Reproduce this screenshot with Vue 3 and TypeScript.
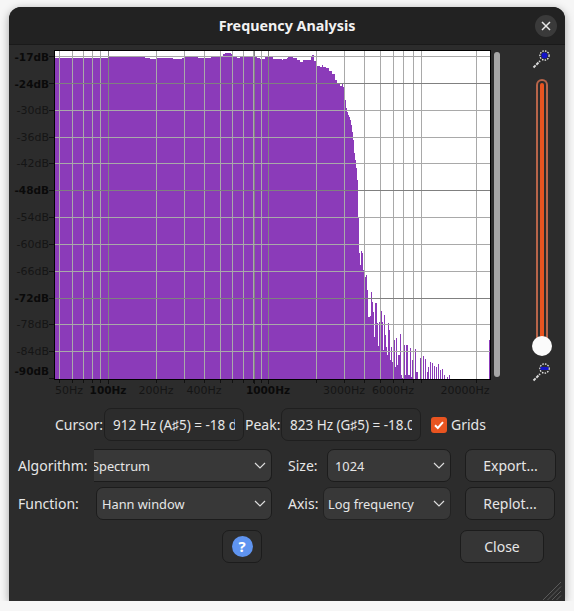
<template>
  <div class="window">
    <div class="titlebar">
      <span class="title">Frequency Analysis</span>
      <button class="win-close">
        <svg width="10" height="10" viewBox="0 0 10 10"><path d="M1 1l8 8M9 1l-8 8" stroke="#e8e8e8" stroke-width="1.5" fill="none" /></svg>
      </button>
    </div>

    <div class="plot-row">
      <svg class="plot" width="483" height="355" viewBox="9 45 483 355">
        <rect x="54" y="50" width="437" height="330" fill="#000" />
        <rect x="55" y="51" width="435" height="328" fill="#fff" />
        <path :d="spectrumPath" fill="#8b3bb9" shape-rendering="crispEdges" />
        <g shape-rendering="crispEdges">
          <line v-for="v in vLines" :key="'v' + v.x" :x1="v.x + 0.5" :x2="v.x + 0.5" y1="51" y2="379" :stroke="v.major ? '#828282' : '#a9a9a9'" />
          <line v-for="h in dbLines" :key="'h' + h.y" x1="55" x2="490" :y1="h.y + 0.5" :y2="h.y + 0.5" :stroke="h.major ? '#808080' : '#a9a9a9'" />
          <line v-for="v in vLines" :key="'t' + v.x" :x1="v.x + 0.5" :x2="v.x + 0.5" y1="380" :y2="v.major ? 384 : 383" stroke="#111" />
          <line v-for="h in dbLines" :key="'d' + h.y" x1="49" x2="54" :y1="h.y + 0.5" :y2="h.y + 0.5" stroke="#111" />
          <line x1="49" x2="54" y1="378.5" y2="378.5" stroke="#111" />
        </g>
        <text v-for="l in dbLabels" :key="l.text" class="axis" :class="{ strong: l.major }" x="49" :y="l.y" text-anchor="end">{{ l.text }}</text>
        <text v-for="l in hzLabels" :key="l.text" class="axis" :class="{ strong: l.major }" :x="l.x" y="394" text-anchor="middle">{{ l.text }}</text>
      </svg>

      <div class="scrollbar"></div>

      <div class="gain">
        <svg class="wand" width="20" height="20" viewBox="0 0 20 20">
          <path d="M1.5 18.5l6.5-6.5" stroke="#d8d8d8" stroke-width="2" stroke-dasharray="3 1" fill="none" />
          <circle cx="12.5" cy="6.5" r="4.600" fill="none" stroke="#ececec" stroke-width="1.3" stroke-dasharray="1.500 1.200" />
          <circle cx="12.5" cy="6.5" r="3" fill="#1414c8" />
        </svg>
        <div class="track">
          <div class="fill"></div>
          <div class="thumb"></div>
        </div>
        <svg class="wand low" width="20" height="20" viewBox="0 0 20 20">
          <path d="M1.5 18.5l6.5-6.5" stroke="#d8d8d8" stroke-width="2" stroke-dasharray="3 1" fill="none" />
          <circle cx="12.5" cy="6.5" r="4.600" fill="none" stroke="#ececec" stroke-width="1.3" stroke-dasharray="1.500 1.200" />
          <rect x="8.5" y="5" width="8" height="3" fill="#1414c8" />
        </svg>
      </div>
    </div>

    <div class="readout">
      <label class="cursor">Cursor:</label>
      <input class="field" readonly value="912 Hz (A♯5) = -18 dB" />
      <label class="peak">Peak:</label>
      <input class="field" readonly value="823 Hz (G♯5) = -18.0 dB" />
      <span class="check">
        <svg width="12" height="12" viewBox="0 0 12 12"><path d="M2 6.2l2.8 2.8L10 3.2" stroke="#fff" stroke-width="2" fill="none" /></svg>
      </span>
      <label>Grids</label>
    </div>

    <div class="row first">
      <label class="row-label">Algorithm:</label>
      <div class="combo algo">
        <span class="clipped">Spectrum</span>
        <svg class="chev" width="12" height="7" viewBox="0 0 12 7"><path d="M1 1l5 5 5-5" /></svg>
      </div>
      <label class="mid-label">Size:</label>
      <div class="combo size">
        <span>1024</span>
        <svg class="chev" width="12" height="7" viewBox="0 0 12 7"><path d="M1 1l5 5 5-5" /></svg>
      </div>
      <button class="btn side export">Export...</button>
    </div>

    <div class="row second">
      <label class="row-label">Function:</label>
      <div class="combo func">
        <span>Hann window</span>
        <svg class="chev" width="12" height="7" viewBox="0 0 12 7"><path d="M1 1l5 5 5-5" /></svg>
      </div>
      <label class="mid-label">Axis:</label>
      <div class="combo axis-combo">
        <span>Log frequency</span>
        <svg class="chev" width="12" height="7" viewBox="0 0 12 7"><path d="M1 1l5 5 5-5" /></svg>
      </div>
      <button class="btn side">Replot...</button>
    </div>

    <div class="row third">
      <button class="btn help"><span class="help-dot">?</span></button>
      <button class="btn close">Close</button>
    </div>

    <svg class="grip" width="20" height="20" viewBox="0 0 20 20">
      <path d="M1 19L19 1M5.5 19L19 5.500M10 19l9-9M14.500 19l4.500-4.500" stroke="#5a5a5a" stroke-width="1" fill="none" />
    </svg>
  </div>
</template>

<script setup lang="ts">
import { computed } from 'vue'

// x of each frequency grid line; the darker ones are the decades
const vLines = [59, 72, 83, 92, 100, 108, 156, 184, 204, 220, 232, 243, 253, 254, 261, 268, 316, 344, 364, 380, 393, 403, 413, 421, 476].map((x) => ({
  x,
  major: x === 108 || x === 254 || x === 268,
}))

const dbLines = [56, 83, 110, 137, 163, 190, 217, 244, 271, 298, 324, 351].map((y) => ({
  y,
  major: y === 83 || y === 190 || y === 298,
}))

const dbLabels = [
  ['-17dB', 61, true], ['-24dB', 88, true], ['-30dB', 114, false], ['-36dB', 141, false],
  ['-42dB', 167, false], ['-48dB', 194, true], ['-54dB', 221, false], ['-60dB', 248, false],
  ['-66dB', 275, false], ['-72dB', 302, true], ['-78dB', 328, false], ['-84dB', 355, false],
  ['-90dB', 375, true],
].map(([text, y, major]) => ({ text: text as string, y: y as number, major: major as boolean }))

const hzLabels = [
  { text: '50Hz', x: 69, major: false },
  { text: '100Hz', x: 108, major: true },
  { text: '200Hz', x: 156, major: false },
  { text: '400Hz', x: 204, major: false },
  { text: '1000Hz', x: 268, major: true },
  { text: '3000Hz', x: 344, major: false },
  { text: '6000Hz', x: 393, major: false },
  { text: '20000Hz', x: 465, major: false },
]

// [first column, top y] runs read off the curve, each lasts until the next one
const runs: [number, number][] = [
  [55, 58], [108, 57], [145, 58], [150, 59], [157, 58], [173, 59], [182, 58], [185, 57], [198, 58],
  [211, 57], [215, 56], [223, 54], [225, 53], [231, 54], [233, 57], [237, 58], [240, 57], [257, 58],
  [260, 59], [265, 57], [268, 56], [273, 59], [282, 60], [283, 59], [287, 58], [288, 57], [293, 58],
  [297, 60], [300, 62], [303, 60], [311, 57], [312, 55], [314, 61], [317, 66], [320, 67], [322, 65],
  [323, 67], [326, 68], [329, 71], [332, 74], [335, 80], [337, 83], [340, 86], [342, 84], [343, 87],
  [344, 96], [345, 100], [346, 108], [347, 112], [348, 115], [349, 117], [350, 120], [351, 125],
  [352, 132], [353, 140], [354, 153], [355, 160], [356, 168], [357, 180], [358, 217], [359, 253],
  [360, 265], [361, 251], [362, 253], [363, 270], [364, 298], [365, 277], [366, 275], [367, 290],
  [368, 317], [370, 316], [371, 292], [372, 302], [373, 312], [374, 337], [375, 303], [377, 323],
  [378, 346], [379, 322], [381, 311], [382, 322], [383, 350], [384, 315], [385, 335], [386, 347],
  [387, 355], [388, 323], [389, 330], [390, 360], [391, 347], [392, 362], [393, 340], [395, 367],
  [396, 338], [397, 365], [398, 355], [400, 334], [401, 375], [402, 378], [403, 345], [405, 375],
  [406, 345], [408, 375], [410, 348], [411, 377], [412, 360], [413, 379], [415, 349], [416, 372],
  [418, 379], [420, 358], [421, 379], [423, 356], [424, 379], [425, 359], [426, 379], [427, 372],
  [428, 367], [429, 379], [430, 362], [431, 379], [432, 363], [433, 379], [434, 366], [435, 379],
  [436, 367], [437, 379], [438, 364], [439, 379], [440, 370], [441, 379], [442, 369], [443, 379],
  [444, 375], [445, 379], [447, 377], [448, 379], [449, 375], [450, 379], [489, 340], [490, 379],
]

const spectrumPath = computed(() => {
  let d = ''
  for (let i = 0; i < runs.length - 1; i++) {
    const [x, top] = runs[i]
    const next = runs[i + 1][0]
    if (top >= 379) continue
    d += `M${x} ${top}H${next}V379H${x}Z`
  }
  return d
})
</script>

<style>
html,
body {
  background: #f6f6f6;
}
</style>

<style scoped>
.window {
  position: relative;
  box-sizing: border-box;
  width: 556px;
  height: 594px;
  margin: 7px 0 0 9px;
  background: #2c2c2c;
  border-radius: 12px 12px 0 0;
  box-shadow: 0 2px 8px rgba(0, 0, 0, 0.35);
  color: #e6e6e6;
  font-family: "Noto Sans", sans-serif;
  font-size: 14px;
  overflow: hidden;
}

.titlebar {
  display: flex;
  align-items: center;
  justify-content: center;
  height: 37px;
  background: #222222;
  border-bottom: 1px solid #1a1a1a;
  position: relative;
}

.title {
  font-weight: 700;
  font-size: 14.3px;
  color: #f2f2f2;
}

.win-close {
  position: absolute;
  right: 8px;
  top: 8px;
  width: 22px;
  height: 22px;
  border: none;
  border-radius: 50%;
  background: #3a3a3a;
  display: flex;
  align-items: center;
  justify-content: center;
  padding: 0;
}

.plot-row {
  display: flex;
  height: 363px;
}

.plot {
  display: block;
  flex: none;
}

.axis {
  font-family: "DejaVu Sans", sans-serif;
  font-size: 11px;
  fill: #151515;
}

.axis.strong {
  font-size: 10.5px;
  font-weight: 700;
  fill: #0a0a0a;
}

.scrollbar {
  flex: none;
  width: 6px;
  height: 325px;
  margin: 7px 0 0 2px;
  border-radius: 3px;
  background: #a6a6a6;
}

.gain {
  flex: none;
  width: 40px;
  margin-left: 22px;
  display: flex;
  flex-direction: column;
  align-items: center;
}

.wand {
  flex: none;
  margin-top: 4px;
}

.wand.low {
  margin-top: auto;
  margin-bottom: 26px;
}

.track {
  position: relative;
  box-sizing: border-box;
  flex: none;
  width: 12px;
  height: 266px;
  margin-top: 10px;
  border: 2px solid #b8654a;
  border-bottom: none;
  border-radius: 6px 6px 0 0;
  background: #2c2c2c;
}

.fill {
  position: absolute;
  left: 2px;
  right: 2px;
  top: 2px;
  bottom: 0;
  border-radius: 2px 2px 0 0;
  background: #e95420;
}

.thumb {
  position: absolute;
  left: 50%;
  bottom: -11px;
  width: 20px;
  height: 20px;
  margin-left: -10px;
  border-radius: 50%;
  background: #fbfbfb;
}

.readout {
  display: flex;
  align-items: center;
  height: 33px;
  padding-left: 46px;
}

.readout label {
  flex: none;
  white-space: nowrap;
}

.readout .cursor {
  width: 49px;
}

.readout .peak {
  width: 36px;
  margin-left: 1px;
}

.field {
  box-sizing: border-box;
  flex: none;
  width: 140px;
  height: 33px;
  padding: 0 8px;
  border: 1px solid #1f1f1f;
  border-radius: 7px;
  background: #2c2c2c;
  color: #e6e6e6;
  font: inherit;
  font-size: 13.5px;
  outline: none;
}

.check {
  display: flex;
  align-items: center;
  justify-content: center;
  width: 16px;
  height: 16px;
  margin: 0 4px 0 10px;
  border-radius: 3px;
  background: #e95420;
}

.row {
  display: flex;
  align-items: center;
  height: 33px;
}

.row.first {
  margin-top: 8px;
}

.row.second {
  margin-top: 5px;
}

.row.third {
  margin-top: 10px;
}

.row-label {
  width: 76px;
  margin-left: 9px;
  flex: none;
  white-space: nowrap;
}

.mid-label {
  width: 35px;
  margin-left: 16px;
  flex: none;
}

.combo {
  box-sizing: border-box;
  flex: none;
  display: flex;
  align-items: center;
  justify-content: space-between;
  height: 33px;
  padding: 0 5px;
  border: 1px solid #1c1c1c;
  border-radius: 7px;
  background: #383838;
  font-size: 12.8px;
  overflow: hidden;
}

.combo.algo {
  width: 178px;
  padding-left: 0;
  border-left: none;
  border-radius: 0 7px 7px 0;
}

.clipped {
  margin-left: -2px;
}

.combo.func {
  width: 176px;
  margin-left: 2px;
}

.combo.size {
  width: 124px;
  margin-left: 4px;
  padding-left: 7px;
}

.combo.axis-combo {
  width: 128px;
  padding-left: 4px;
  border-color: #222;
}

.chev {
  flex: none;
}

.chev path {
  fill: none;
  stroke: #dcdcdc;
  stroke-width: 1.2;
}

.btn {
  box-sizing: border-box;
  height: 33px;
  border: 1px solid #1c1c1c;
  border-radius: 7px;
  background: #353535;
  color: #e6e6e6;
  font: inherit;
  padding: 0;
}

.btn.side {
  width: 90px;
  margin-left: 14px;
  flex: none;
}

.btn.export {
  width: 91px;
}

.btn.help {
  width: 40px;
  margin-left: 213px;
  display: flex;
  align-items: center;
  justify-content: center;
  background: #2e2e2e;
}

.help-dot {
  display: block;
  width: 21px;
  height: 21px;
  border-radius: 50%;
  background: #5f94f0;
  color: #fff;
  font-weight: 700;
  font-size: 15px;
  line-height: 21px;
  text-align: center;
}

.btn.close {
  width: 84px;
  margin-left: 198px;
}

.grip {
  position: absolute;
  right: 3px;
  bottom: 0;
}
</style>
